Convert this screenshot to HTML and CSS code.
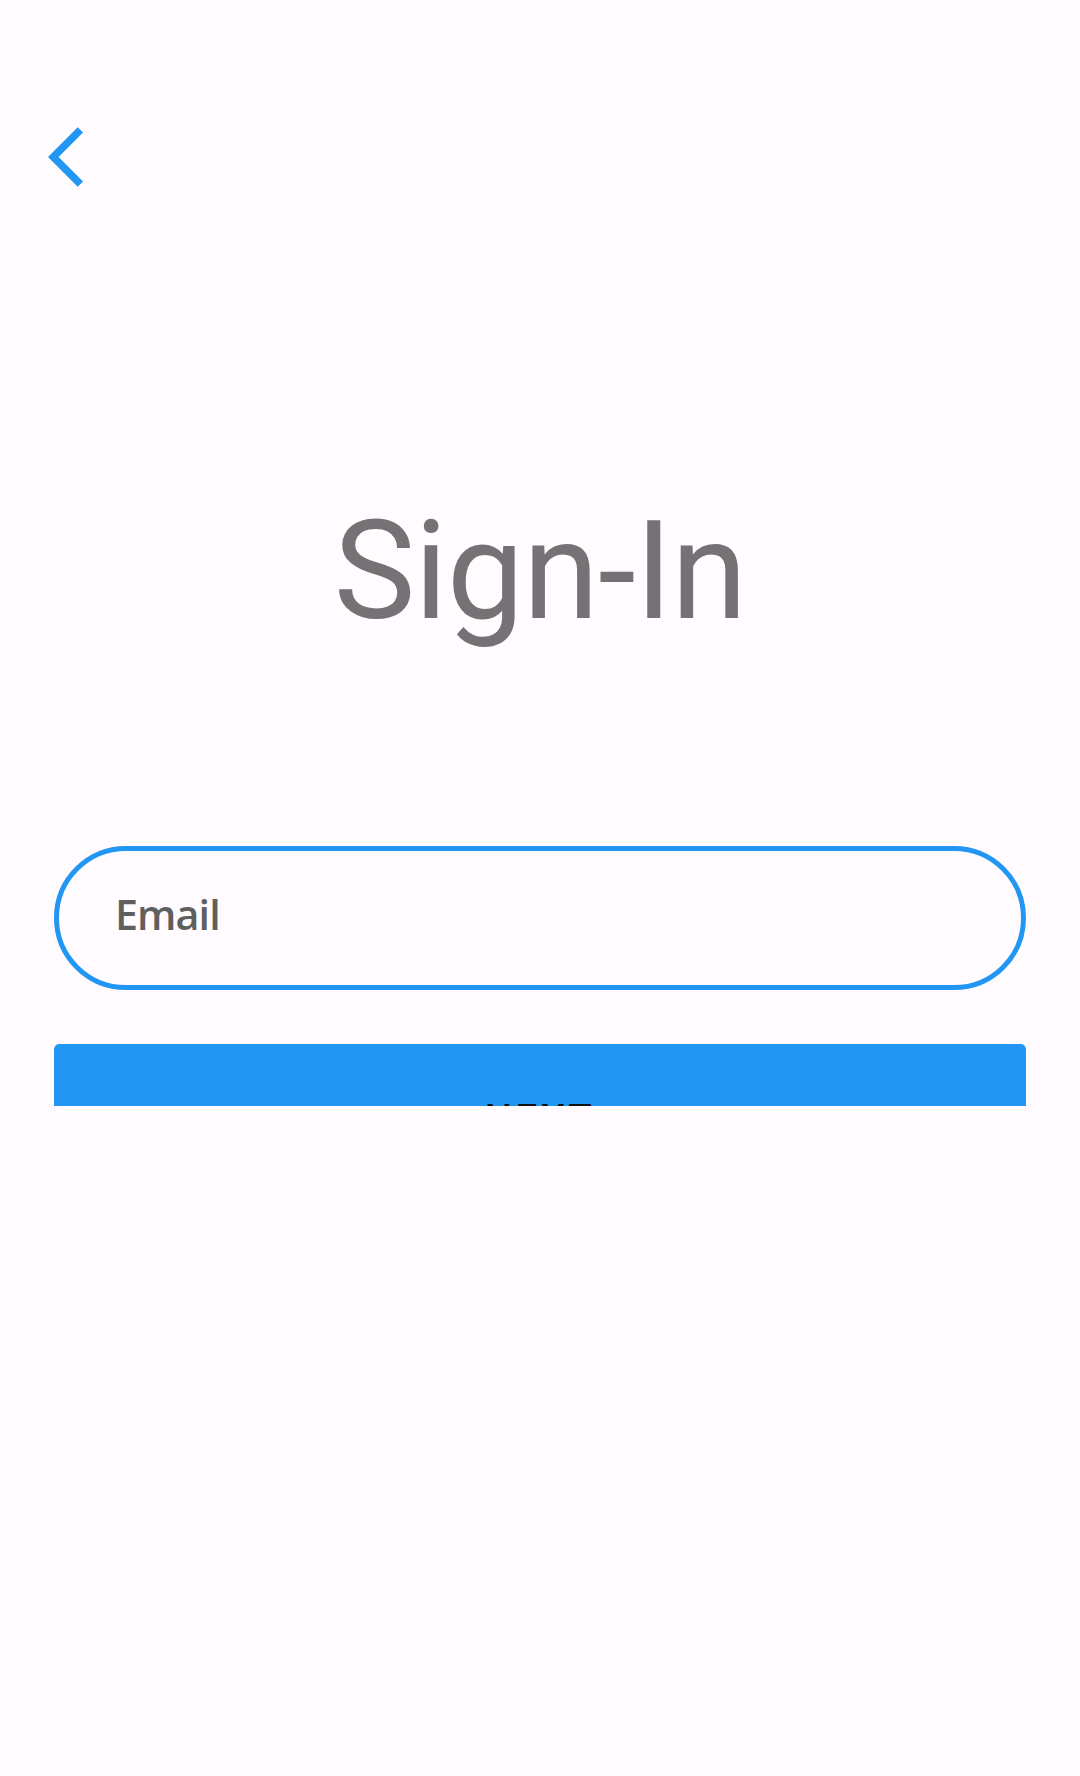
FILE: index.html
```html
<!DOCTYPE html>
<html lang="en">
<head>
<meta charset="utf-8">
<title>Sign-In</title>
<link rel="stylesheet" href="styles.css">
</head>
<body>
<div class="screen">
  <header class="appbar">
    <button class="back" aria-label="Back">
      <svg viewBox="0 0 24 24" width="72" height="72"><path d="M11.67 3.87L9.9 2.1 0 12l9.9 9.9 1.77-1.77L3.54 12z" fill="#2196F3"/></svg>
    </button>
  </header>
  <h1 class="title">Sign-In</h1>
  <form class="form">
    <input class="email" type="email" placeholder="Email">
    <div class="btn-clip">
      <button type="button" class="next">NEXT</button>
    </div>
  </form>
</div>
</body>
</html>
```
FILE: styles.css
```css
html, body {
  margin: 0;
  padding: 0;
  background: #fffbfe;
}
.screen {
  width: 1080px;
  height: 1776px;
  background: #fffbfe;
  display: flex;
  flex-direction: column;
  font-family: Roboto, "Liberation Sans", sans-serif;
}
.appbar {
  padding: 121px 0 0 48px;
  height: 72px;
}
.back {
  display: block;
  width: 72px;
  height: 72px;
  padding: 0;
  border: 0;
  background: none;
}
.back svg { display: block; }
.title {
  margin: 310px 0 0 0;
  font-family: Roboto, sans-serif;
  font-weight: 400;
  font-size: 137.5px;
  line-height: 137.5px;
  letter-spacing: -1px;
  color: #747275;
  text-align: center;
}
.form {
  margin: 205px 54px 0 54px;
  display: flex;
  flex-direction: column;
  gap: 54px;
}
.email {
  box-sizing: border-box;
  width: 100%;
  height: 144px;
  border: 5.5px solid #2196F3;
  border-radius: 72px;
  padding: 0 0 8px 56px;
  background: transparent;
  font-family: "Open Sans", "Noto Sans", sans-serif;
  font-weight: 600;
  font-size: 41.25px;
  letter-spacing: -0.9px;
  color: #1c1b1f;
  outline: none;
}
.email::placeholder {
  color: #5f5f5f;
  opacity: 1;
}
.btn-clip {
  height: 62px;
  overflow: hidden;
  border-radius: 5px 5px 0 0;
}
.next {
  display: block;
  width: 100%;
  height: 144px;
  border: 0;
  border-radius: 5px;
  background: #2196F3;
  color: #111;
  font-family: Roboto, sans-serif;
  font-weight: 500;
  font-size: 38.5px;
  letter-spacing: 3.4px;
  padding: 5px 0 0 0;
}
```
